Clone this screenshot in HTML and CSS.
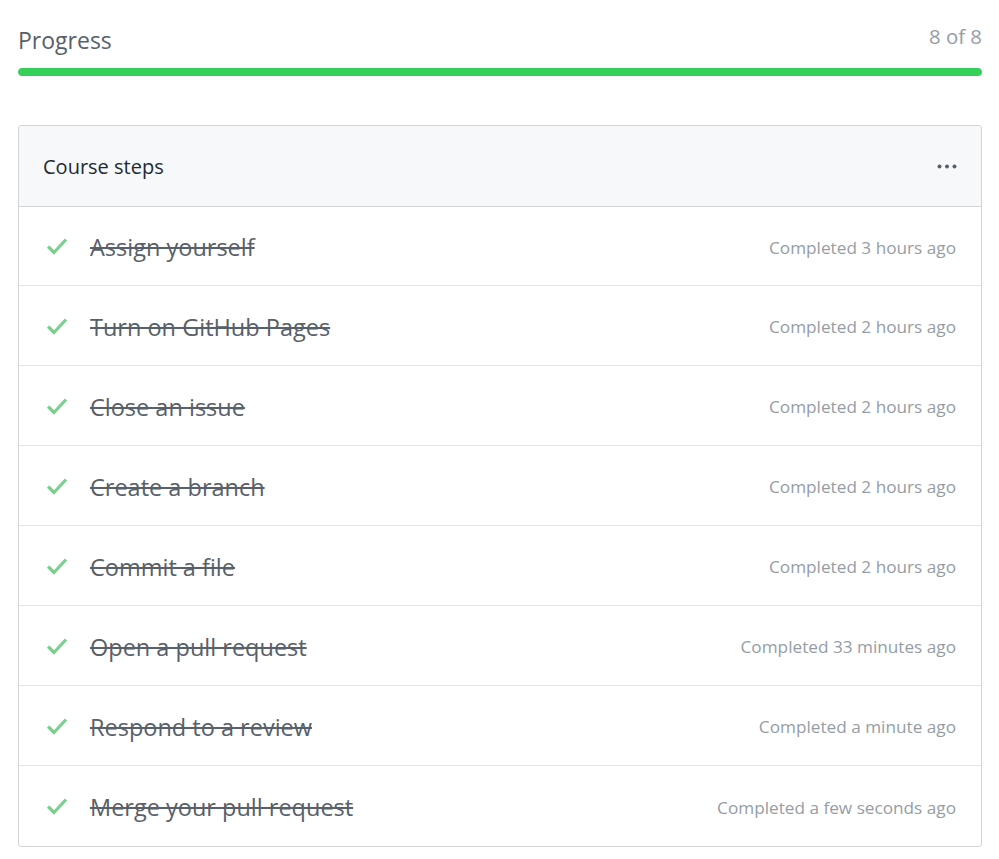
FILE: index.html
```html
<!DOCTYPE html>
<html>
<head>
<meta charset="utf-8">
<link rel="stylesheet" href="styles.css">
</head>
<body>
<div class="page">
  <div class="progress-head">
    <h2 class="progress-title">Progress</h2>
    <span class="progress-count">8 of 8</span>
  </div>
  <div class="progress-bar"><div class="progress-fill" style="width:100%"></div></div>

  <div class="card">
    <div class="card-header">
      <span class="card-title">Course steps</span>
      <svg class="dots" width="20" height="5" viewBox="0 0 20 5"><circle cx="2.5" cy="2.5" r="2" fill="#586069"/><circle cx="10" cy="2.5" r="2" fill="#586069"/><circle cx="17.5" cy="2.5" r="2" fill="#586069"/></svg>
    </div>
    <ul class="steps">
      <li class="step"><svg class="check" width="22" height="18" viewBox="0 0 22 18"><path d="M2 9.5 L8 15.5 L20 2.5" fill="none" stroke="#7ccf8f" stroke-width="3.2"/></svg><span class="step-name">Assign yourself</span><span class="step-time">Completed 3 hours ago</span></li>
      <li class="step"><svg class="check" width="22" height="18" viewBox="0 0 22 18"><path d="M2 9.5 L8 15.5 L20 2.5" fill="none" stroke="#7ccf8f" stroke-width="3.2"/></svg><span class="step-name">Turn on GitHub Pages</span><span class="step-time">Completed 2 hours ago</span></li>
      <li class="step"><svg class="check" width="22" height="18" viewBox="0 0 22 18"><path d="M2 9.5 L8 15.5 L20 2.5" fill="none" stroke="#7ccf8f" stroke-width="3.2"/></svg><span class="step-name">Close an issue</span><span class="step-time">Completed 2 hours ago</span></li>
      <li class="step"><svg class="check" width="22" height="18" viewBox="0 0 22 18"><path d="M2 9.5 L8 15.5 L20 2.5" fill="none" stroke="#7ccf8f" stroke-width="3.2"/></svg><span class="step-name">Create a branch</span><span class="step-time">Completed 2 hours ago</span></li>
      <li class="step"><svg class="check" width="22" height="18" viewBox="0 0 22 18"><path d="M2 9.5 L8 15.5 L20 2.5" fill="none" stroke="#7ccf8f" stroke-width="3.2"/></svg><span class="step-name">Commit a file</span><span class="step-time">Completed 2 hours ago</span></li>
      <li class="step"><svg class="check" width="22" height="18" viewBox="0 0 22 18"><path d="M2 9.5 L8 15.5 L20 2.5" fill="none" stroke="#7ccf8f" stroke-width="3.2"/></svg><span class="step-name">Open a pull request</span><span class="step-time">Completed 33 minutes ago</span></li>
      <li class="step"><svg class="check" width="22" height="18" viewBox="0 0 22 18"><path d="M2 9.5 L8 15.5 L20 2.5" fill="none" stroke="#7ccf8f" stroke-width="3.2"/></svg><span class="step-name">Respond to a review</span><span class="step-time">Completed a minute ago</span></li>
      <li class="step"><svg class="check" width="22" height="18" viewBox="0 0 22 18"><path d="M2 9.5 L8 15.5 L20 2.5" fill="none" stroke="#7ccf8f" stroke-width="3.2"/></svg><span class="step-name">Merge your pull request</span><span class="step-time">Completed a few seconds ago</span></li>
    </ul>
  </div>
</div>
</body>
</html>
```

FILE: styles.css
```css
* { box-sizing: border-box; }
body {
  margin: 0;
  background: #fff;
  font-family: "Open Sans", "Noto Sans", "Liberation Sans", sans-serif;
}
.page {
  padding: 18px 17px 0 18px;
}
.progress-head {
  display: flex;
  justify-content: space-between;
  align-items: flex-start;
  height: 50px;
}
.progress-title {
  margin: 7px 0 0 0;
  font-size: 23px;
  font-weight: 400;
  color: #586069;
  line-height: 30px;
}
.progress-count {
  margin-top: 4px;
  font-size: 20.4px;
  color: #959da5;
  line-height: 28px;
}
.progress-bar {
  height: 8px;
  border-radius: 4px;
  background: #e1e4e8;
  overflow: hidden;
}
.progress-fill {
  height: 100%;
  background: #34d058;
  border-radius: 4px;
}
.card {
  margin-top: 49px;
  border: 1px solid #d1d5da;
  border-radius: 3px;
  overflow: hidden;
}
.card-header {
  height: 81px;
  background: #f6f8fa;
  border-bottom: 1px solid #d1d5da;
  display: flex;
  align-items: center;
  justify-content: space-between;
  padding: 1px 24px 0 24px;
}
.card-title {
  font-size: 20px;
  color: #24292e;
}
.dots { display: block; }
.steps {
  list-style: none;
  margin: 0;
  padding: 0;
}
.step {
  height: 80px;
  display: flex;
  align-items: center;
  padding: 2px 25px 0 27px;
  border-top: 1px solid #e1e4e8;
}
.step:first-child { border-top: none; height: 78px; }
.step:last-child { height: 81px; }
.check { flex: none; margin-right: 22px; margin-top: -2px; }
.step-name {
  flex: 1;
  font-size: 23.5px;
  color: #586069;
  text-decoration: line-through;
  text-decoration-thickness: 2px;
}
.step-time {
  font-size: 17.2px;
  color: #959da5;
}
```
